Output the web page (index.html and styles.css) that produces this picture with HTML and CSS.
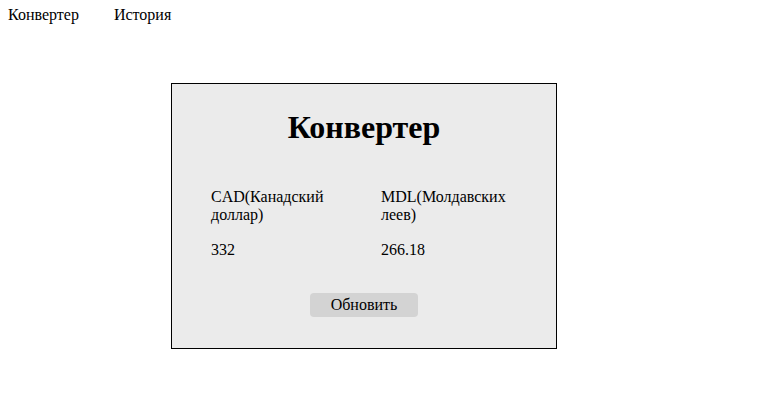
FILE: index.html
```html
<!DOCTYPE html>
<html lang="ru">
<head>
<meta charset="utf-8">
<title>Конвертер</title>
<link rel="stylesheet" href="styles.css">
</head>
<body>
<nav class="nav">
  <a class="nav-link" href="#">Конвертер</a>
  <a class="nav-link" href="#">История</a>
</nav>
<main class="page">
  <section class="card">
    <h1 class="card-title">Конвертер</h1>
    <div class="rates">
      <div class="cell">CAD(Канадский доллар)</div>
      <div class="cell">MDL(Молдавских леев)</div>
      <div class="cell">332</div>
      <div class="cell">266.18</div>
    </div>
    <div class="actions">
      <button class="btn" type="button">Обновить</button>
    </div>
  </section>
</main>
</body>
</html>
```

FILE: styles.css
```css
html, body {
  margin: 0;
  padding: 0;
  background: #fff;
}
body {
  font-family: "Liberation Serif", "Times New Roman", serif;
  font-size: 16px;
  color: #000;
  padding: 6px 8px 0 8px;
}
.nav {
  display: flex;
  gap: 35px;
}
.nav-link {
  color: #000;
  text-decoration: none;
}
.page {
  display: flex;
  padding: 59px 0 0 163px;
}
.card {
  box-sizing: border-box;
  width: 386px;
  height: 266px;
  border: 1px solid #000;
  background: #ebebeb;
  padding: 25px 39px 0 39px;
  display: flex;
  flex-direction: column;
}
.card-title {
  margin: 0;
  font-size: 32px;
  font-weight: bold;
  text-align: center;
}
.rates {
  display: grid;
  grid-template-columns: 150px 150px;
  column-gap: 20px;
  row-gap: 17px;
  margin-top: 42px;
}
.actions {
  display: flex;
  justify-content: center;
  margin-top: 34px;
}
.btn {
  font-family: "Liberation Serif", "Times New Roman", serif;
  font-size: 16px;
  color: #000;
  background: #d3d3d3;
  border: none;
  border-radius: 4px;
  width: 108px;
  height: 24px;
  padding: 0;
}
```
